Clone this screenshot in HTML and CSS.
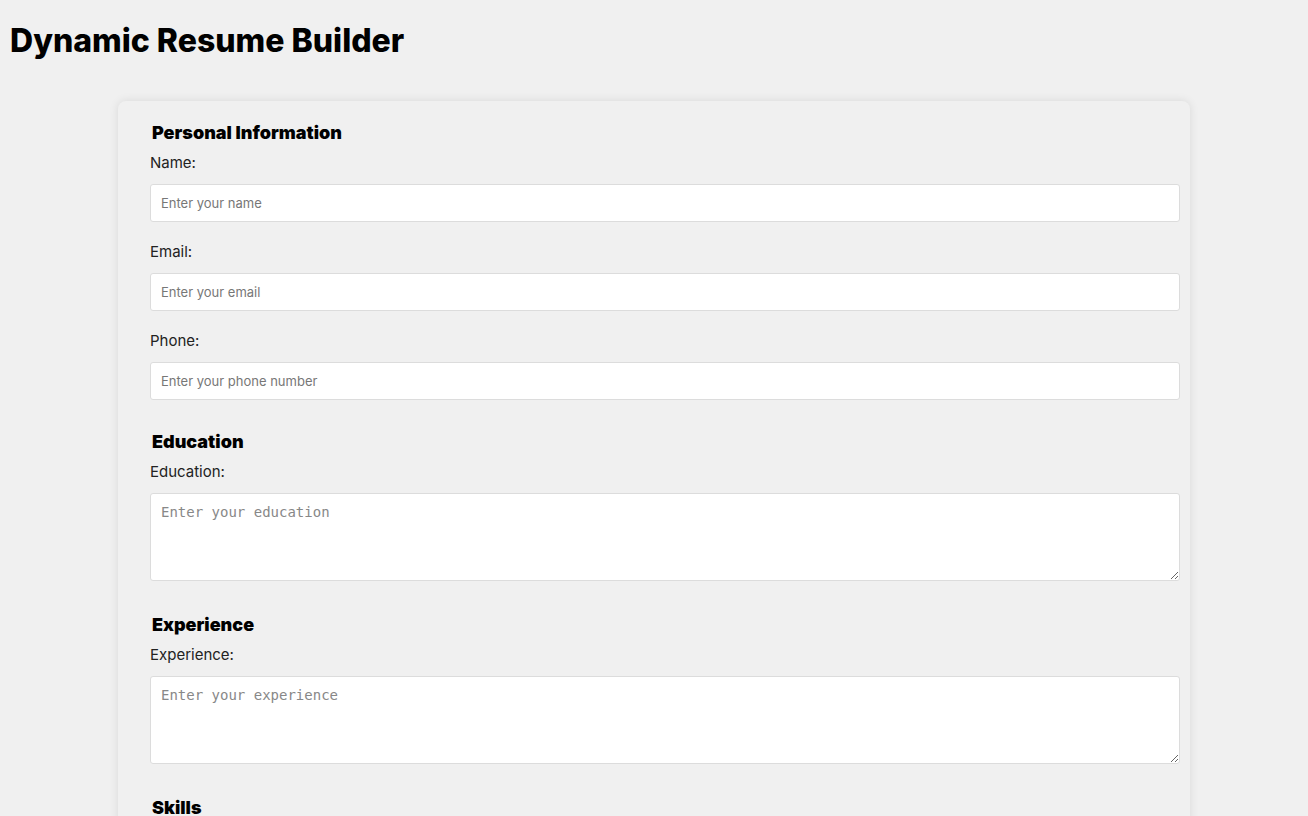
FILE: index.html
```html
<!DOCTYPE html>
<html lang="en">
<head>
<meta charset="utf-8">
<title>Dynamic Resume Builder</title>
<link rel="stylesheet" href="styles.css">
</head>
<body>
<h1 class="title">Dynamic Resume Builder</h1>
<form class="card">
  <h2 class="section-title">Personal Information</h2>
  <label class="field-label" for="name">Name:</label>
  <input class="field-input" id="name" type="text" placeholder="Enter your name">
  <label class="field-label" for="email">Email:</label>
  <input class="field-input" id="email" type="email" placeholder="Enter your email">
  <label class="field-label" for="phone">Phone:</label>
  <input class="field-input" id="phone" type="tel" placeholder="Enter your phone number">

  <h2 class="section-title">Education</h2>
  <label class="field-label" for="education">Education:</label>
  <textarea class="field-area" id="education" placeholder="Enter your education"></textarea>

  <h2 class="section-title">Experience</h2>
  <label class="field-label" for="experience">Experience:</label>
  <textarea class="field-area" id="experience" placeholder="Enter your experience"></textarea>

  <h2 class="section-title">Skills</h2>
  <label class="field-label" for="skills">Skills:</label>
  <textarea class="field-area" id="skills" placeholder="Enter your skills"></textarea>
</form>
</body>
</html>
```
FILE: styles.css
```css
html, body {
  background: #f0f0f0;
}
body {
  margin: 8px;
  font-family: Inter, "Noto Sans", sans-serif;
  color: #222;
}
.title {
  font-size: 32px;
  font-weight: 800;
  line-height: 39px;
  margin: 13px 0 0;
  padding-left: 2px;
  color: #000;
}
.card {
  width: 1008px;
  margin: 41px auto 20px;
  padding: 21px 32px 24px;
  background: #f0f0f0;
  border-radius: 8px;
  box-shadow: 0 0 10px rgba(0, 0, 0, 0.1);
}
.section-title {
  font-size: 18px;
  font-weight: 900;
  line-height: 22px;
  margin: 31px 0 10px;
  padding-left: 2px;
  color: #000;
}
.section-title:first-child {
  margin-top: 0;
}
.field-label {
  display: block;
  font-size: 15px;
  line-height: 18px;
  margin-bottom: 12px;
  color: #222;
}
.field-input {
  display: block;
  width: 100%;
  height: 16px;
  padding: 10px;
  margin: 0 0 21px;
  border: 1px solid #dcdcdc;
  border-radius: 3px;
  background: #fff;
  font-family: Inter, "Noto Sans", sans-serif;
  font-size: 13px;
  line-height: 16px;
  color: #222;
}
.field-input::placeholder {
  color: #777;
}
.field-area {
  display: block;
  width: 100%;
  height: 66px;
  padding: 10px;
  margin: 0 0 33px;
  border: 1px solid #dcdcdc;
  border-radius: 3px;
  background: #fff;
  font-family: "DejaVu Sans Mono", monospace;
  font-size: 14px;
  color: #222;
}
.field-area::placeholder {
  color: #888;
}
```
